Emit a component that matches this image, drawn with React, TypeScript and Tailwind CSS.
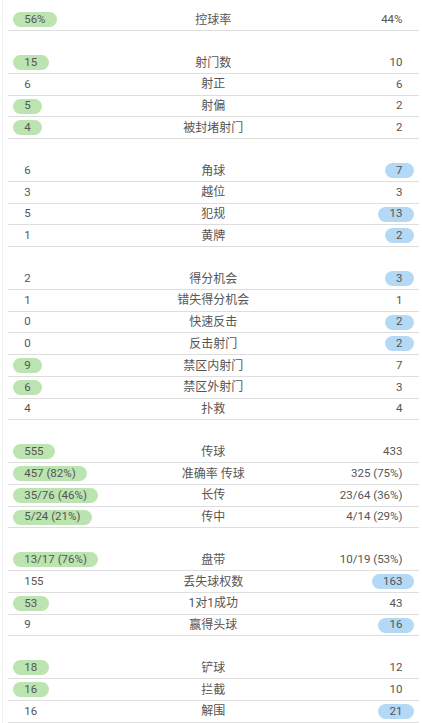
type Side = 'g' | 'b' | '';
type Row = [string, Side, string, string, Side];

const sections: Row[][] = [
  [['56%', 'g', '控球率', '44%', '']],
  [
    ['15', 'g', '射门数', '10', ''],
    ['6', '', '射正', '6', ''],
    ['5', 'g', '射偏', '2', ''],
    ['4', 'g', '被封堵射门', '2', ''],
  ],
  [
    ['6', '', '角球', '7', 'b'],
    ['3', '', '越位', '3', ''],
    ['5', '', '犯规', '13', 'b'],
    ['1', '', '黄牌', '2', 'b'],
  ],
  [
    ['2', '', '得分机会', '3', 'b'],
    ['1', '', '错失得分机会', '1', ''],
    ['0', '', '快速反击', '2', 'b'],
    ['0', '', '反击射门', '2', 'b'],
    ['9', 'g', '禁区内射门', '7', ''],
    ['6', 'g', '禁区外射门', '3', ''],
    ['4', '', '扑救', '4', ''],
  ],
  [
    ['555', 'g', '传球', '433', ''],
    ['457 (82%)', 'g', '准确率 传球', '325 (75%)', ''],
    ['35/76 (46%)', 'g', '长传', '23/64 (36%)', ''],
    ['5/24 (21%)', 'g', '传中', '4/14 (29%)', ''],
  ],
  [
    ['13/17 (76%)', 'g', '盘带', '10/19 (53%)', ''],
    ['155', '', '丢失球权数', '163', 'b'],
    ['53', 'g', '1对1成功', '43', ''],
    ['9', '', '赢得头球', '16', 'b'],
  ],
  [
    ['18', 'g', '铲球', '12', ''],
    ['16', 'g', '拦截', '10', ''],
    ['16', '', '解围', '21', 'b'],
  ],
];

function Pill({ value, hl }: { value: string; hl: Side }) {
  const bg = hl === 'g' ? 'bg-[#bce4b1]' : hl === 'b' ? 'bg-[#b3d9f6]' : '';
  return (
    <span className={`inline-flex h-[15px] items-center rounded-full px-[11.5px] leading-none ${bg}`}>
      {value}
    </span>
  );
}

export default function App() {
  return (
    <div
      className="min-h-[723px] w-[422px] bg-white pl-[8px] pr-[3px] pt-[9.4px] text-[11.5px] text-[#555]"
      style={{ fontFamily: 'Roboto, "Noto Sans CJK SC", sans-serif' }}
    >
      <div className="absolute left-[2px] top-0 h-[723px] border-l border-[#eef0f0]" />
      {sections.map((rows, si) => (
        <div key={si} className={si > 0 ? 'mt-[21px]' : ''}>
          {rows.map(([l, lh, label, r, rh]) => (
            <div
              key={label}
              className="grid h-[21.75px] grid-cols-[1fr_auto_1fr] items-center border-b border-[#dedede] pl-[4.7px] pr-[5px]"
            >
              <div className="flex justify-start">
                <Pill value={l} hl={lh} />
              </div>
              <div className="text-center text-[12px]">{label}</div>
              <div className="flex justify-end">
                <Pill value={r} hl={rh} />
              </div>
            </div>
          ))}
        </div>
      ))}
    </div>
  );
}
